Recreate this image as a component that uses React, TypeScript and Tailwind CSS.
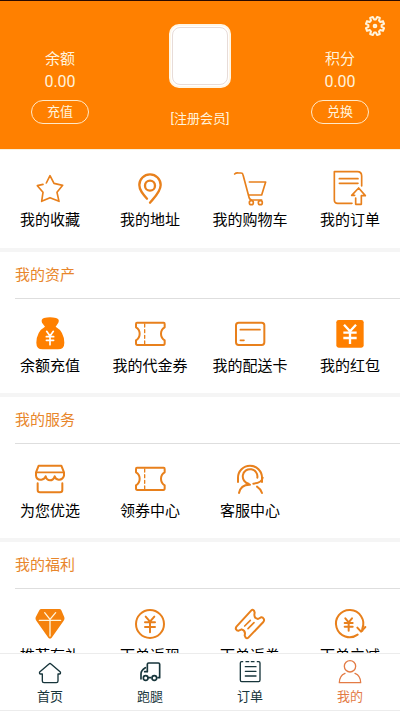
import type { ReactNode } from 'react';

type Item = { label: string; icon: ReactNode };

function Icon({ children, width = 6 }: { children: ReactNode; width?: number }) {
  return (
    <svg
      viewBox="0 0 108 108"
      className="size-9"
      fill="none"
      stroke="#e8801c"
      strokeWidth={width}
      strokeLinecap="round"
      strokeLinejoin="round"
      aria-hidden="true"
    >
      {children}
    </svg>
  );
}

function NavIcon({ children }: { children: ReactNode }) {
  return (
    <svg
      viewBox="-3 -3 78 78"
      className="size-[26px]"
      fill="none"
      stroke="currentColor"
      strokeWidth={4}
      strokeLinecap="round"
      strokeLinejoin="round"
      aria-hidden="true"
    >
      {children}
    </svg>
  );
}

const ticket = (
  <Icon>
    <path d="M15 20H95Q98 20 98 24V34Q87 40 87 53Q87 66 98 73V82Q98 87 94 87H16Q12 87 12 82V73Q23 66 23 53Q23 40 12 34V24Q12 20 15 20Z" />
    <path d="M38 24V84" strokeWidth="4" strokeDasharray="9 8" />
  </Icon>
);

const quick: Item[] = [
  {
    label: '我的收藏',
    icon: (
      <Icon width={5}>
        <path d="M43 39L54 17L66 40L92 46L75 67L81 94L54 83L29 94L33 67L16 47L33 43" />
      </Icon>
    ),
  },
  {
    label: '我的地址',
    icon: (
      <Icon width={7}>
        <path d="M54 98C64 86 86 66 86 45A32 32 0 0 0 22 45C22 61 33 73 45 86" />
        <circle cx="54" cy="47" r="15" />
      </Icon>
    ),
  },
  {
    label: '我的购物车',
    icon: (
      <Icon width={5}>
        <path d="M8 12Q12 8 20 9H27Q32 9 33 14L51 82Q53 90 60 90H89" />
        <path d="M52 36H101L89 75H50" />
        <circle cx="58" cy="98" r="6" />
        <circle cx="85" cy="98" r="6" />
      </Icon>
    ),
  },
  {
    label: '我的订单',
    icon: (
      <Icon width={5}>
        <path d="M89 48V18Q89 5 76 5H7V90Q7 100 17 100H60M22 26H78M22 40H78" />
        <path d="M71 84V103H88V77H100L80 54L59 76H68" />
      </Icon>
    ),
  },
];

const assets: Item[] = [
  {
    label: '余额充值',
    icon: (
      <Icon>
        <path
          d="M36 6Q54 2 72 6Q84 10 79 20L71 32Q96 46 97 80Q97 100 78 100H32Q13 100 13 80Q14 46 39 32L30 20Q26 9 36 6Z"
          fill="#ff8000"
          stroke="none"
        />
        <path d="M44 46L54 60L64 46M54 60V86M43 62H65M43 73H65" stroke="#fff" strokeWidth="5" />
      </Icon>
    ),
  },
  { label: '我的代金券', icon: ticket },
  {
    label: '我的配送卡',
    icon: (
      <Icon>
        <rect x="12" y="20" width="85" height="67" rx="8" />
        <path d="M25 41H84" strokeWidth="5" />
        <path d="M25 73H36" strokeWidth="5" />
      </Icon>
    ),
  },
  {
    label: '我的红包',
    icon: (
      <Icon>
        <rect x="13" y="12" width="82" height="83" rx="7" fill="#ff8000" stroke="none" />
        <path
          d="M36 26L54 46L72 26M54 46V84M34 50H74M34 66H74"
          stroke="#fff"
          strokeWidth="7"
          strokeLinecap="butt"
        />
      </Icon>
    ),
  },
];

const services: Item[] = [
  {
    label: '为您优选',
    icon: (
      <Icon>
        <path d="M20 14H88L96 34V44Q92 57 80 56Q70 55 68 46Q64 58 54 58Q44 58 41 46Q38 55 28 56Q13 57 12 44V34Z" />
        <path d="M14 34H94" strokeWidth="5" />
        <path d="M17 67V87Q17 94 24 94H84Q91 94 91 87V67" />
      </Icon>
    ),
  },
  { label: '领券中心', icon: ticket },
  {
    label: '客服中心',
    icon: (
      <Icon>
        <path d="M18 63V50A36 36 0 0 1 90 50V63" />
        <path d="M50 68A22 22 0 1 1 76 50" />
        <path d="M92 50Q90 66 64 68M21 96Q26 70 54 71M75 77Q86 84 90 96" />
      </Icon>
    ),
  },
];

const benefits: Item[] = [
  {
    label: '推荐有礼',
    icon: (
      <Icon>
        <path
          d="M28 9H82Q86 9 88 13L97 34Q99 39 95 44L59 95Q54 100 49 95L13 44Q9 39 11 34L22 13Q24 9 28 9Z"
          fill="#f5820c"
          stroke="none"
        />
        <path d="M38 20L54 40L71 20M22 43H86M54 43V90" stroke="#fff5dc" strokeWidth="4" />
      </Icon>
    ),
  },
  {
    label: '下单返现',
    icon: (
      <Icon>
        <circle cx="54" cy="54" r="42" />
        <path d="M41 32L54 47L67 32M54 47V79M39 49H69M39 63H69" />
      </Icon>
    ),
  },
  {
    label: '下单返券',
    icon: (
      <Icon>
        <path d="M58 13Q62 9 66 14L68 20Q64 36 78 39L87 34Q92 33 95 38Q98 43 94 48L49 95Q45 99 41 95L38 88Q42 74 29 70L20 74Q15 75 12 70Q10 66 14 61Z" />
        <path d="M38 60L55 43M48 68L66 50" strokeWidth="5" />
      </Icon>
    ),
  },
  {
    label: '下单立减',
    icon: (
      <Icon>
        <path d="M77 86A41 41 0 1 1 91 68V74" />
        <path d="M76 65L87 77L100 63" />
        <path d="M40 37L50 49L60 37M50 49V74M38 51H62M38 62H62" />
      </Icon>
    ),
  },
];

const sections: { title: string; items: Item[] }[] = [
  { title: '我的资产', items: assets },
  { title: '我的服务', items: services },
  { title: '我的福利', items: benefits },
];

const tabs: Item[] = [
  {
    label: '首页',
    icon: (
      <NavIcon>
        <path d="M33 9Q36 6 39 9L67 33Q69 38 64 39H60V60Q60 65 55 65H18Q13 65 13 60V39H8Q3 38 5 33Z" />
      </NavIcon>
    ),
  },
  {
    label: '跑腿',
    icon: (
      <NavIcon>
        <path
          d="M28 32V10Q28 6 32 6H61Q65 6 65 10V50H60M38 50H32M22 20Q9 28 9 38V54M20 32H28"
          strokeWidth="5"
        />
        <circle cx="23" cy="51" r="7" strokeWidth="5" />
        <circle cx="49" cy="51" r="7" strokeWidth="5" />
      </NavIcon>
    ),
  },
  {
    label: '订单',
    icon: (
      <NavIcon>
        <path d="M14 2H11Q7 2 7 6V57Q7 62 11 62H62Q66 62 66 57V6Q66 2 62 2H58M24 2H32M40 2H48M22 17H54M22 31H54M22 45H54" />
      </NavIcon>
    ),
  },
  {
    label: '我的',
    icon: (
      <NavIcon>
        <circle cx="36" cy="16" r="17" />
        <path d="M21 37Q4 44 4 65H68Q68 44 51 37" />
      </NavIcon>
    ),
  },
];

function gearPath(teeth: number) {
  const step = (Math.PI * 2) / teeth;
  const points: string[] = [];
  for (let i = 0; i < teeth; i++) {
    const mid = i * step + step / 2;
    [
      [-0.32, 20],
      [-0.2, 28],
      [0.2, 28],
      [0.32, 20],
    ].forEach(([offset, radius]) => {
      const angle = mid + offset * step;
      points.push(`${(30 + radius * Math.sin(angle)).toFixed(1)} ${(30 - radius * Math.cos(angle)).toFixed(1)}`);
    });
  }
  return `M${points.join('L')}Z`;
}

function Account({ name, action }: { name: string; action: string }) {
  return (
    <div className="flex w-[30%] flex-col items-center pt-[46px] text-[15px] leading-6">
      <span>{name}</span>
      <span className="text-base leading-[22px]">0.00</span>
      <button
        type="button"
        className="mt-[7px] h-6 w-[58px] rounded-full border border-[#ffe9c8] text-[13px] leading-5"
      >
        {action}
      </button>
    </div>
  );
}

function Grid({ items }: { items: Item[] }) {
  return (
    <div className="grid grid-cols-4">
      {items.map((item) => (
        <a key={item.label} href="#" className="flex flex-col items-center gap-0.5 whitespace-nowrap">
          {item.icon}
          <span>{item.label}</span>
        </a>
      ))}
    </div>
  );
}

export default function App() {
  return (
    <div className="flex h-screen flex-col bg-white font-['Roboto','Noto_Sans_CJK_SC',sans-serif] text-[15px] leading-6 text-black">
      <main className="min-h-0 flex-1 overflow-y-auto [scrollbar-width:none]">
        <header className="relative flex h-[150px] border-t border-b border-t-[#2a0a00] border-b-[#f8f0dc] bg-[#ff8000] text-[#fff3dc]">
          <Account name="余额" action="充值" />
          <div className="flex flex-1 flex-col items-center pt-[23px]">
            <div className="h-16 w-[62px] rounded-[10px] border-2 border-[#fff6e6] bg-white p-px">
              <div className="h-full rounded-lg border border-[#e8dcd8]" />
            </div>
            <span className="mt-5 text-[13px] leading-[22px]">[注册会员]</span>
          </div>
          <Account name="积分" action="兑换" />
          <button type="button" aria-label="设置" className="absolute top-[14px] right-[14px]">
            <svg
              viewBox="-3 -3 66 66"
              className="size-[22px]"
              fill="none"
              stroke="#fff3dc"
              strokeWidth={6}
              strokeLinejoin="round"
              aria-hidden="true"
            >
              <path d={gearPath(8)} />
              <circle cx="30" cy="30" r="4" />
            </svg>
          </button>
        </header>

        <div className="pt-5 pb-4">
          <Grid items={quick} />
        </div>

        {sections.map((section) => (
          <section key={section.title} className="border-t-4 border-[#f5f5f5] pb-[15px]">
            <h2 className="mb-[17px] ml-[15px] border-b border-[#dedede] py-[11px] text-[#e8862b]">
              {section.title}
            </h2>
            <Grid items={section.items} />
          </section>
        ))}
      </main>

      <nav className="grid h-[58px] grid-cols-4 border-t border-b border-[#ececec] bg-white pt-1.5 text-[13px] leading-[22px] text-[#17353b]">
        {tabs.map((tab) => (
          <a
            key={tab.label}
            href="#"
            aria-current={tab.label === '我的' ? 'page' : undefined}
            className="flex flex-col items-center aria-[current=page]:text-[#e37b45]"
          >
            {tab.icon}
            <span>{tab.label}</span>
          </a>
        ))}
      </nav>
    </div>
  );
}
